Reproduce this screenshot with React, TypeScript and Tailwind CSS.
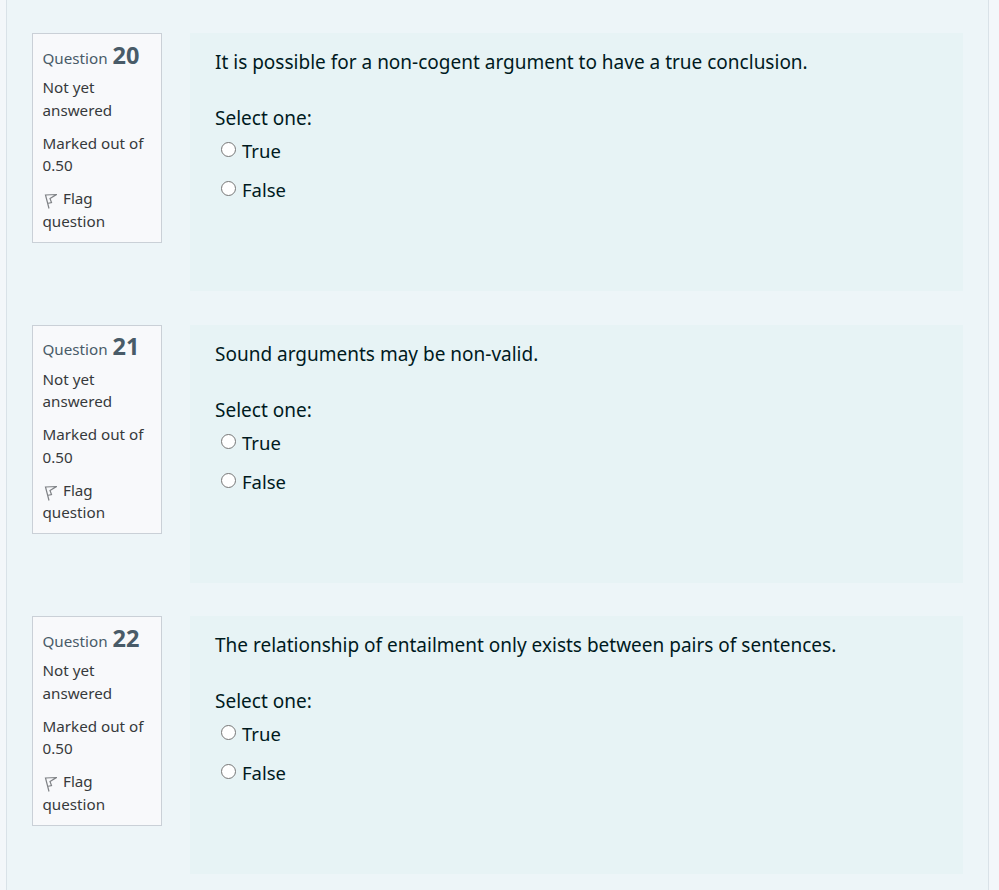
const questions = [
  { n: 20, text: "It is possible for a non-cogent argument to have a true conclusion." },
  { n: 21, text: "Sound arguments may be non-valid." },
  { n: 22, text: "The relationship of entailment only exists between pairs of sentences." },
];

function Flag() {
  return (
    <svg width="13" height="16" viewBox="0 0 13 16" fill="none" stroke="#7f8286" strokeWidth="1.2" className="mr-[6.5px] ml-[1px] inline-block align-[-5px]">
      <path d="M5 15.5 L1.5 2 L12.5 1.5 L6 5.5 L7.5 9.5 L3.4 10.5" />
    </svg>
  );
}

function Radio({ label }: { label: string }) {
  return (
    <div className="flex h-[39px] items-start pl-[6px]">
      <span className="mt-[5px] mr-[6px] h-[15px] w-[15px] rounded-full border border-[#767676] bg-white" />
      <span className="text-[18.5px] leading-[27px]">{label}</span>
    </div>
  );
}

function Question({ n, text }: { n: number; text: string }) {
  return (
    <div className="mb-[33.5px] flex items-start gap-[28px]">
      <div className="h-[209.5px] w-[130px] shrink-0 border border-[#cad0d7] bg-[#f8f9fb] px-[9.5px] pt-[9.5px] text-[15.2px] leading-[22.5px] text-[#373a3c]">
        <div className="flex h-[32.5px] items-baseline text-[#495b68]">
          <span className="text-[15.2px]">Question</span>
          <span className="ml-[5px] text-[23.5px] font-bold">{n}</span>
        </div>
        <div className="mb-[10.5px]">Not yet<br />answered</div>
        <div className="mb-[10.5px]">Marked out of<br />0.50</div>
        <div><Flag />Flag<br />question</div>
      </div>
      <div className="h-[258px] w-[773px] shrink-0 bg-[#e7f3f5] px-[25px] pt-[15px] text-[19px] text-[#001a1e]">
        <div className="mb-[28px] leading-[28px]">{text}</div>
        <div className="leading-[28px]">Select one:</div>
        <div className="pt-[5px]">
          <Radio label="True" />
          <Radio label="False" />
        </div>
      </div>
    </div>
  );
}

export default function App() {
  return (
    <div className="h-[890px] overflow-hidden bg-[#f3f7fa] pr-[10px] pl-[6px] font-['Noto_Sans',sans-serif]">
      <div className="h-full border-x border-[#d9e2e8] bg-[#edf5f8] pt-[33px] pl-[25px]">
        {questions.map((q) => (
          <Question key={q.n} {...q} />
        ))}
      </div>
    </div>
  );
}
